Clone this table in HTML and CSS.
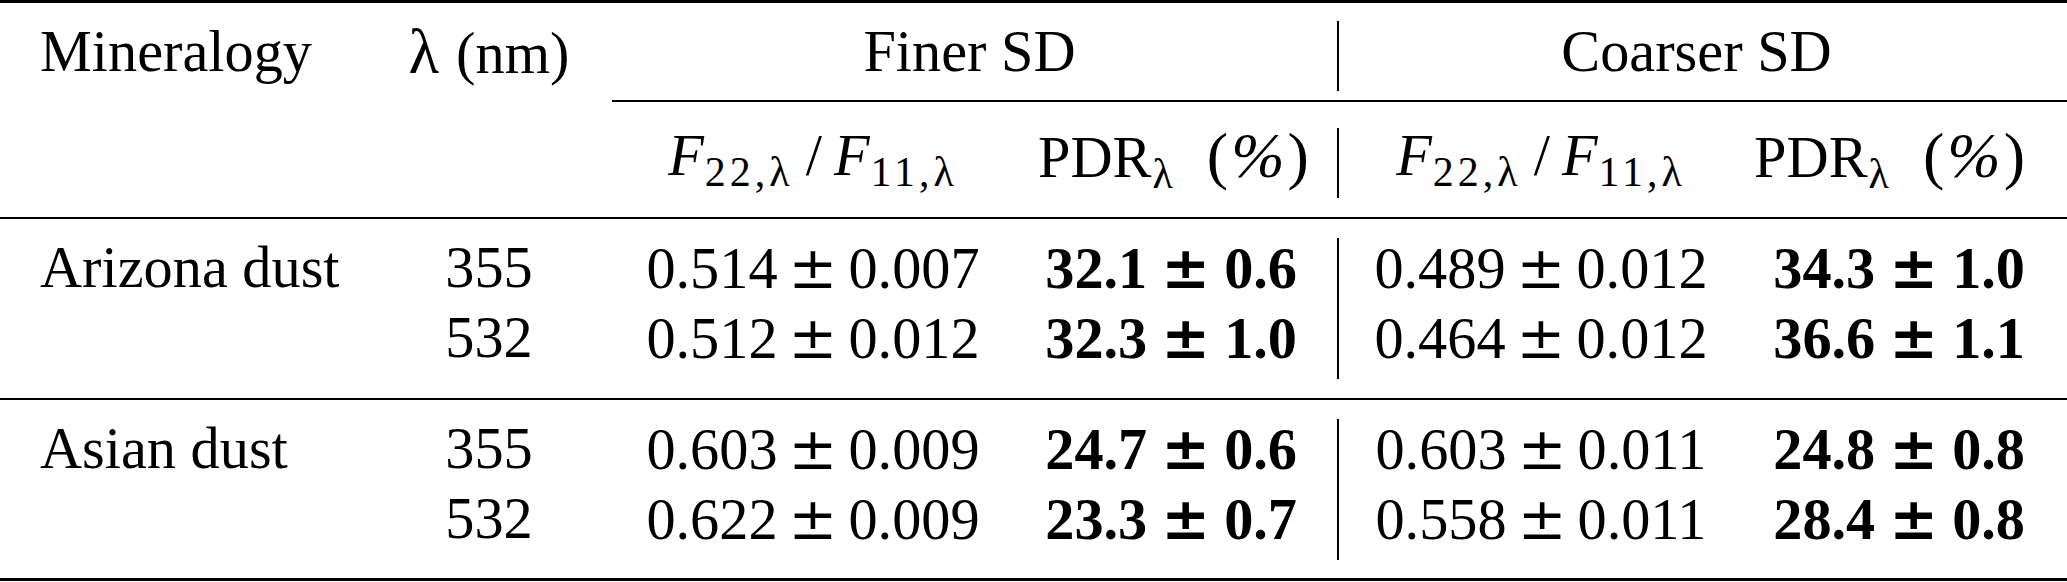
FILE: index.html
```html
<!DOCTYPE html>
<html lang="en">
<head>
    <meta charset="UTF-8">
    <meta name="viewport" content="width=device-width, initial-scale=1.0">
    <title>Depolarization ratios of dust</title>
    <link rel="stylesheet" href="styles.css">
</head>
<body>
    <div class="dust-table">
        <!-- toprule -->
        <div class="rule heavy r-top"></div>

        <!-- header, first line -->
        <div class="cell c1 h1">Mineralogy</div>
        <div class="cell c2 h1"><span class="lam">λ</span>(nm)</div>
        <div class="cell group finer h1">Finer SD</div>
        <div class="vbar bar-h1"></div>
        <div class="cell group coarser h1">Coarser SD</div>

        <div class="cmid"></div>

        <!-- header, second line -->
        <div class="cell c3 h2"><i>F</i><sub>22,λ</sub><span class="slash">/</span><i>F</i><sub>11,λ</sub></div>
        <div class="cell c4 h2">PDR<sub>λ</sub><span class="unit">(<i>%</i>)</span></div>
        <div class="vbar bar-h2"></div>
        <div class="cell c6 h2"><i>F</i><sub>22,λ</sub><span class="slash">/</span><i>F</i><sub>11,λ</sub></div>
        <div class="cell c7 h2">PDR<sub>λ</sub><span class="unit">(<i>%</i>)</span></div>

        <div class="rule r-mid1"></div>

        <!-- Arizona dust -->
        <div class="cell c1 a1">Arizona dust</div>
        <div class="cell c2 a1">355</div>
        <div class="cell c3 a1">0.514<span class="pm">±</span>0.007</div>
        <div class="cell c4 a1 bold">32.1<span class="pm">±</span>0.6</div>
        <div class="vbar bar-a"></div>
        <div class="cell c6 a1">0.489<span class="pm">±</span>0.012</div>
        <div class="cell c7 a1 bold">34.3<span class="pm">±</span>1.0</div>

        <div class="cell c2 a2">532</div>
        <div class="cell c3 a2">0.512<span class="pm">±</span>0.012</div>
        <div class="cell c4 a2 bold">32.3<span class="pm">±</span>1.0</div>
        <div class="cell c6 a2">0.464<span class="pm">±</span>0.012</div>
        <div class="cell c7 a2 bold">36.6<span class="pm">±</span>1.1</div>

        <div class="rule r-mid2"></div>

        <!-- Asian dust -->
        <div class="cell c1 b1">Asian dust</div>
        <div class="cell c2 b1">355</div>
        <div class="cell c3 b1">0.603<span class="pm">±</span>0.009</div>
        <div class="cell c4 b1 bold">24.7<span class="pm">±</span>0.6</div>
        <div class="vbar bar-b"></div>
        <div class="cell c6 b1">0.603<span class="pm">±</span>0.011</div>
        <div class="cell c7 b1 bold">24.8<span class="pm">±</span>0.8</div>

        <div class="cell c2 b2">532</div>
        <div class="cell c3 b2">0.622<span class="pm">±</span>0.009</div>
        <div class="cell c4 b2 bold">23.3<span class="pm">±</span>0.7</div>
        <div class="cell c6 b2">0.558<span class="pm">±</span>0.011</div>
        <div class="cell c7 b2 bold">28.4<span class="pm">±</span>0.8</div>

        <!-- bottomrule -->
        <div class="rule heavy r-bottom"></div>
    </div>
</body>
</html>
```

FILE: styles.css
```css
body {
    margin: 0;
    padding: 0;
    background: #fff;
    color: #000;
    font-family: "Liberation Serif", "Times New Roman", serif;
}

.dust-table {
    display: grid;
    width: 2067px;
    grid-template-columns: 400px 188px 450px 292px 16px 390px 331px;
    grid-template-rows: 3px 97px 2px 115px 2px 84px 95px 2px 84px 94px 3px;
    font-size: 58.3px;
    line-height: 70px;
    white-space: nowrap;
}

/* rules */
.rule {
    grid-column: 1 / -1;
    background: #000;
    height: 2px;
}
.rule.heavy {
    height: 3px;
}
.r-top { grid-row: 1; }
.r-mid1 { grid-row: 5; }
.r-mid2 { grid-row: 8; }
.r-bottom { grid-row: 11; }

.cmid {
    grid-row: 3;
    grid-column: 3 / -1;
    margin-left: 24px;
    background: #000;
    height: 2px;
}

/* vertical bar between the two size distributions */
.vbar {
    grid-column: 5;
    justify-self: center;
    width: 2px;
    background: #000;
}
.bar-h1 { grid-row: 2; margin: 18px 0 9px; }
.bar-h2 { grid-row: 4; margin: 26px 0 19px; }
.bar-a { grid-row: 6 / span 2; margin: 19px 0 19px; }
.bar-b { grid-row: 9 / span 2; margin: 19px 0 18px; }

/* rows */
.h1 { grid-row: 2; padding-top: 14px; }
.h2 { grid-row: 4; padding-top: 19px; }
.a1 { grid-row: 6; padding-top: 14px; }
.a2 { grid-row: 7; }
.b1 { grid-row: 9; padding-top: 14px; }
.b2 { grid-row: 10; }

/* columns */
.c1 { grid-column: 1; padding-left: 40px; }
.c2 { grid-column: 2; text-align: center; padding-right: 10px; }
.c3 { grid-column: 3; text-align: center; }
.c4 { grid-column: 4; text-align: right; padding-right: 33px; }
.c6 { grid-column: 6; text-align: center; }
.c7 { grid-column: 7; text-align: right; padding-right: 42px; }

.group { text-align: center; }
.finer { grid-column: 3 / 5; padding-left: 21px; }
.coarser { grid-column: 6 / 8; padding-right: 20px; }

.lam {
    font-size: 1.08em;
    margin-right: 17px;
}

/* math bits */
.cell i {
    font-style: italic;
}
.cell sub {
    font-size: 0.72em;
    line-height: 0;
    vertical-align: -11px;
    letter-spacing: 4px;
    margin-left: 1px;
}
.slash {
    margin: 0 12px;
}
.unit {
    font-size: 1.1em;
    margin-left: 30px;
}
.unit i {
    margin: 0 3px;
}
.pm {
    font-family: "DejaVu Serif", serif;
    margin: 0 11px;
}
.bold {
    font-weight: bold;
}
.bold .pm {
    margin: 0 14px;
}
```
